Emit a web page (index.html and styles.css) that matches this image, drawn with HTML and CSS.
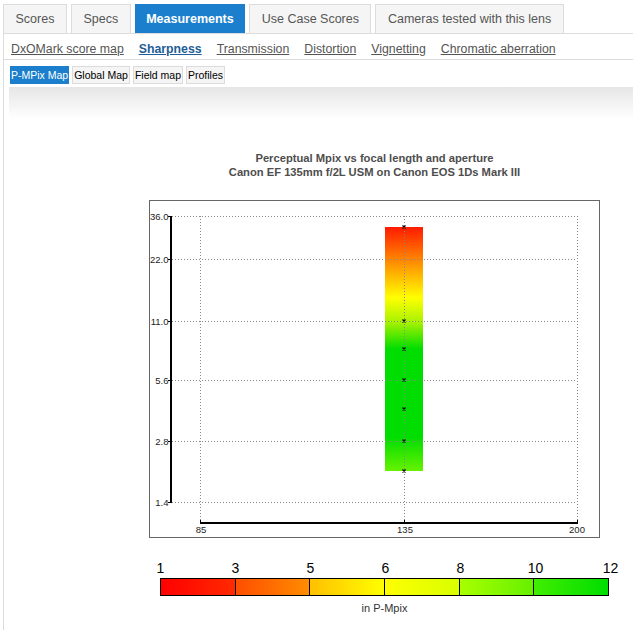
FILE: index.html
```html
<!DOCTYPE html>
<html>
<head>
<meta charset="utf-8">
<link rel="stylesheet" href="styles.css">
</head>
<body>
<div class="tabs">
  <div class="tab">Scores</div>
  <div class="tab">Specs</div>
  <div class="tab active">Measurements</div>
  <div class="tab">Use Case Scores</div>
  <div class="tab">Cameras tested with this lens</div>
</div>
<div class="panel">
  <div class="subtabs">
    <a class="sub">DxOMark score map</a>
    <a class="sub current">Sharpness</a>
    <a class="sub">Transmission</a>
    <a class="sub">Distortion</a>
    <a class="sub">Vignetting</a>
    <a class="sub">Chromatic aberration</a>
  </div>
  <div class="buttons">
    <span class="btn on">P-MPix Map</span>
    <span class="btn">Global Map</span>
    <span class="btn">Field map</span>
    <span class="btn">Profiles</span>
  </div>
  <div class="shade"></div>
  <div class="chart-wrap">
    <div class="chart-title">Perceptual Mpix vs focal length and aperture<br>Canon EF 135mm f/2L USM on Canon EOS 1Ds Mark III</div>
    <svg class="chart" width="451" height="338" viewBox="0 0 451 338">
      <defs>
        <linearGradient id="barg" x1="0" y1="0" x2="0" y2="1">
          <stop offset="0" stop-color="#ff1a00"/>
          <stop offset="0.14" stop-color="#ff8a00"/>
          <stop offset="0.29" stop-color="#ffff00"/>
          <stop offset="0.39" stop-color="#a8f200"/>
          <stop offset="0.5" stop-color="#00dd00"/>
          <stop offset="0.86" stop-color="#00dd00"/>
          <stop offset="1" stop-color="#66f200"/>
        </linearGradient>
      </defs>
      <rect x="0.5" y="0.5" width="450" height="337" fill="#fff" stroke="#666"/>
      <rect x="236" y="27" width="38" height="244" fill="url(#barg)"/>
      <g stroke="#888" stroke-width="1" stroke-dasharray="1 2" fill="none">
        <line x1="23" y1="16.5" x2="428" y2="16.5"/>
        <line x1="23" y1="59.5" x2="428" y2="59.5"/>
        <line x1="23" y1="121.5" x2="428" y2="121.5"/>
        <line x1="23" y1="180.5" x2="428" y2="180.5"/>
        <line x1="23" y1="241.5" x2="428" y2="241.5"/>
        <line x1="23" y1="302.5" x2="428" y2="302.5"/>
        <line x1="51.5" y1="16" x2="51.5" y2="322"/>
        <line x1="255.5" y1="16" x2="255.5" y2="322"/>
        <line x1="428.5" y1="16" x2="428.5" y2="322"/>
      </g>
      <g stroke="#000" fill="none">
        <line x1="22" y1="16" x2="22" y2="303" stroke-width="2"/>
        <line x1="51" y1="323" x2="429" y2="323" stroke-width="2"/>
        <path d="M19 16.5H22M19 59.5H22M19 121.5H22M19 180.5H22M19 241.5H22M19 302.5H22M51.5 320V323M255.5 320V323M428.5 320V323" stroke-width="1"/>
      </g>
      <g stroke="#000" stroke-width="1.2" fill="none">
        <path d="M253.5 25.5l3 3m0-3l-3 3"/>
        <path d="M253.5 119.5l3 3m0-3l-3 3"/>
        <path d="M253.5 147.5l3 3m0-3l-3 3"/>
        <path d="M253.5 178.5l3 3m0-3l-3 3"/>
        <path d="M253.5 207.5l3 3m0-3l-3 3"/>
        <path d="M253.5 239.5l3 3m0-3l-3 3"/>
        <path d="M253.5 269.5l3 3m0-3l-3 3"/>
      </g>
      <g class="ax" text-anchor="end">
        <text x="19.5" y="20">36.0</text>
        <text x="19.5" y="63">22.0</text>
        <text x="19.5" y="125">11.0</text>
        <text x="19.5" y="184">5.6</text>
        <text x="19.5" y="245">2.8</text>
        <text x="19.5" y="306">1.4</text>
      </g>
      <g class="ax" text-anchor="middle">
        <text x="52" y="333">85</text>
        <text x="256" y="333">135</text>
        <text x="428" y="333">200</text>
      </g>
    </svg>
  </div>
  <div class="scale">
    <div class="scale-labels">
      <span>1</span><span>3</span><span>5</span><span>6</span><span>8</span><span>10</span><span>12</span>
    </div>
    <div class="scale-bar">
      <div class="seg s1"></div>
      <div class="seg s2"></div>
      <div class="seg s3"></div>
      <div class="seg s4"></div>
      <div class="seg s5"></div>
      <div class="seg s6"></div>
    </div>
    <div class="unit">in P-Mpix</div>
  </div>
</div>
</body>
</html>
```
FILE: styles.css
```css
html, body {
  margin: 0;
  padding: 0;
  background: #fff;
  font-family: "Liberation Sans", Arial, sans-serif;
}
.tabs {
  display: flex;
  gap: 4px;
  padding: 4px 0 0 3px;
}
.tab {
  height: 28px;
  line-height: 28px;
  padding: 0 11.5px;
  border: 1px solid #dcdcdc;
  border-bottom: none;
  background: #f5f5f5;
  color: #555;
  font-size: 12.5px;
}
.tab.active {
  background: #1b7fcd;
  border-color: #1b7fcd;
  color: #fff;
  font-weight: bold;
  padding: 0 10.5px;
}
.panel {
  margin-left: 3px;
  border-top: 1px solid #dcdcdc;
  border-left: 1px solid #dcdcdc;
  min-height: 600px;
}
.subtabs {
  display: flex;
  gap: 15px;
  height: 26px;
  padding-left: 7px;
  align-items: center;
  border-bottom: 1px solid #dcdcdc;
  box-sizing: border-box;
  padding-top: 5px;
}
.sub {
  font-size: 12.3px;
  color: #555;
  text-decoration: underline;
}
.sub.current {
  color: #235d98;
  font-weight: bold;
}
.buttons {
  display: flex;
  gap: 3px;
  margin-top: 6px;
  padding-left: 6px;
}
.btn {
  height: 16px;
  line-height: 16px;
  padding: 0 1px;
  border: 1px solid #dcdcdc;
  background: #f5f5f5;
  font-size: 10.5px;
  color: #000;
}
.btn.on {
  background: #1b7fcd;
  border-color: #1b7fcd;
  color: #fff;
  padding: 0;
}
.shade {
  margin: 3px 0 0 5px;
  height: 32px;
  background: linear-gradient(#e6e6e6, #fff);
}
.chart-wrap {
  margin-left: 145px;
  width: 451px;
}
.chart-title {
  margin-top: 32px;
  text-align: center;
  font-size: 11.2px;
  line-height: 14px;
  font-weight: bold;
  color: #4d4d4d;
}
.chart {
  display: block;
  margin-top: 21px;
}
.ax {
  font-family: "Liberation Sans", Arial, sans-serif;
  font-size: 9.5px;
  fill: #222;
}
.scale {
  margin-top: 22px;
}
.scale-labels {
  display: flex;
  margin-left: 119px;
  height: 16px;
}
.scale-labels span {
  flex: 0 0 75px;
  text-align: center;
  font-size: 14px;
  line-height: 16px;
  color: #000;
}
.scale-bar {
  display: flex;
  margin: 2px 0 0 156px;
  width: 449px;
  height: 18px;
  border: 1px solid #000;
  box-sizing: border-box;
}
.seg {
  flex: 1;
  border-left: 1px solid #000;
}
.seg.s1 { border-left: none; background: linear-gradient(90deg, #ff0000, #ff2a00); }
.seg.s2 { background: linear-gradient(90deg, #ff4e00, #ff8c00); }
.seg.s3 { background: linear-gradient(90deg, #ffc000, #ffff00); }
.seg.s4 { background: linear-gradient(90deg, #ffff00, #d8ff00); }
.seg.s5 { background: linear-gradient(90deg, #a8ff00, #66f000); }
.seg.s6 { background: linear-gradient(90deg, #40ee00, #00dd00); }
.unit {
  margin: 6px 0 0 156px;
  width: 449px;
  text-align: center;
  font-size: 11px;
  line-height: 13px;
  color: #333;
}
```
